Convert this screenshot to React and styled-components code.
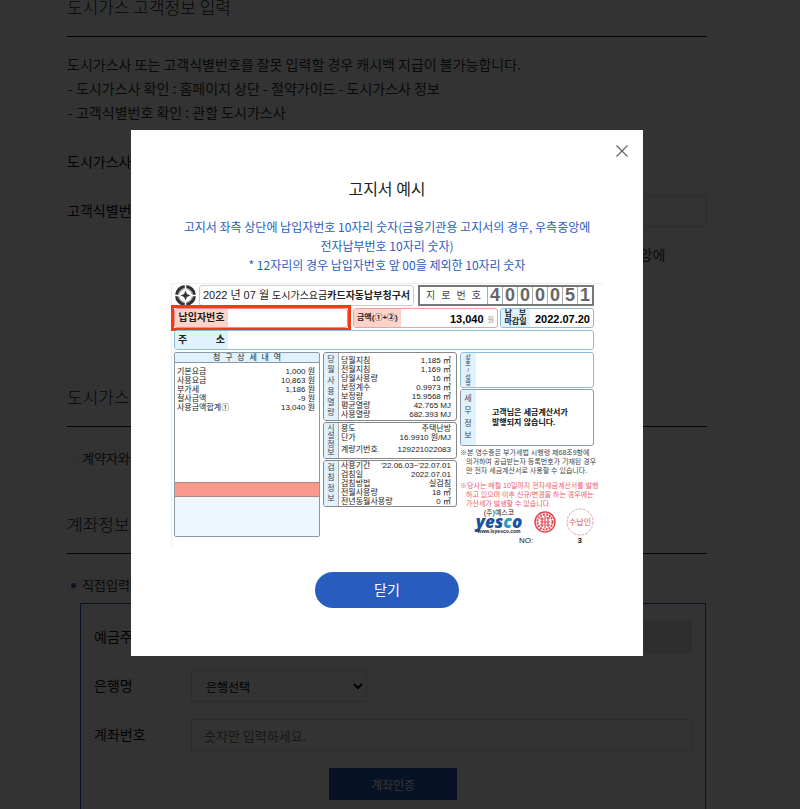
// src/App.jsx
import React from 'react';
import styled, { createGlobalStyle } from 'styled-components';

const GlobalStyle = createGlobalStyle`
  * {
    box-sizing: border-box;
  }

  body {
    margin: 0;
    overflow: hidden;
    background-color: #fff;
    color: #333;
    font-family: "Noto Sans CJK KR", sans-serif;
    font-weight: 400;
    font-size: 14px;
  }

  h2, h3, p {
    margin: 0;
  }

  input, select, button {
    font-family: inherit;
    font-weight: inherit;
  }
`;

/* ---------- page ---------- */

const Page = styled.main`
  height: 100vh;
  overflow: hidden;
  padding-right: 26px;
`;

const Content = styled.div`
  max-width: 640px;
  margin: -5px auto 0;
`;

const Section = styled.section`
  margin-bottom: ${({ $space }) => $space || 0}px;
`;

const Heading = styled.h2`
  padding-bottom: 17px;
  border-bottom: 1px solid #222;
  color: #222;
  font-size: 17px;
  font-weight: 300;
  line-height: 24px;
`;

const Guide = styled.div`
  padding: 15px 0 22px;
  line-height: 24px;
`;

const GuideItem = styled.p`
  padding-left: 1px;
`;

const Row = styled.div`
  display: flex;
  align-items: center;
  min-height: 32px;
  margin-bottom: 17px;
`;

const Label = styled.label`
  flex: 0 0 97px;
  padding-bottom: 3px;
  white-space: nowrap;
  color: #111;
`;

const TextInput = styled.input`
  flex: 1;
  min-width: 0;
  height: 32px;
  padding: 0 12px;
  border: 1px solid #ddd;
  background-color: #fff;
  font-size: 13px;

  &::placeholder {
    color: #777;
    opacity: 1;
  }

  &:disabled {
    background-color: #e4e4e4;
  }
`;

const Select = styled.select`
  width: 176px;
  height: 32px;
  padding: 0 0 0 10px;
  border: 1px solid #ddd;
  background-color: #fff;
  color: #000;
  font-size: 12px;
`;

const Note = styled.p`
  padding: 0 40px 0 124px;
  margin-top: -2px;
  line-height: 24px;
`;

const RadioLabel = styled.label`
  display: flex;
  align-items: center;
  gap: 3px;
  padding: ${({ $bottom }) => `19px 0 ${$bottom}px 1px`};
  font-size: 13px;
  line-height: 24px;
`;

const Radio = styled.input`
  appearance: none;
  width: 11px;
  height: 11px;
  margin: 0;
  border: 1px solid #ddd;
  border-radius: 50%;

  &:checked {
    background: radial-gradient(circle, #285dbf 2px, #fff 3px);
  }
`;

const AccountBox = styled.div`
  margin-left: 13px;
  margin-right: 1px;
  padding: 17px 13px;
  border: 1px solid #285dbf;
`;

const VerifyButton = styled.button`
  display: block;
  width: 128px;
  height: 32px;
  margin: 0 auto;
  border: none;
  background-color: #285dbf;
  color: #fff;
  font-size: 12px;
`;

/* ---------- popup ---------- */

const Overlay = styled.div`
  position: fixed;
  inset: 0;
  overflow: auto;
  padding: 130px 26px 0 0;
  background-color: rgba(0, 0, 0, 0.8);
`;

const Modal = styled.div`
  position: relative;
  display: flex;
  flex-direction: column;
  align-items: center;
  max-width: 512px;
  margin: 0 auto;
  padding: 46px 40px 48px;
  background-color: #fff;
`;

const ModalTitle = styled.h2`
  margin-bottom: 17px;
  color: #222;
  font-size: 16px;
  font-weight: 400;
  line-height: 24px;
`;

const ModalText = styled.p`
  margin-bottom: 9px;
  color: #285dbf;
  font-size: 12px;
  line-height: 19px;
  text-align: center;
  word-break: keep-all;
`;

const CloseIcon = styled.button`
  position: absolute;
  top: 10px;
  right: 10px;
  width: 22px;
  height: 22px;
  padding: 0;
  border: none;
  background: none;

  svg {
    display: block;
    margin: auto;
  }
`;

const CloseButton = styled.button`
  width: 144px;
  height: 36px;
  margin-top: 24px;
  padding-bottom: 3px;
  border: none;
  border-radius: 18px;
  background-color: #285dbf;
  color: #fff;
  font-size: 14px;
`;

/* ---------- bill sample ---------- */

const Bill = styled.div`
  align-self: stretch;
  height: 265px;
  padding: 1px 9px 0 2px;
  border-top: 1px solid #eee;
  border-left: 1px solid #eee;
  color: #222;
  font-family: "Liberation Sans", "Noto Sans CJK KR", sans-serif;
  font-size: 8px;
  line-height: 9px;
  white-space: nowrap;
`;

const BillRow = styled.div`
  display: flex;
  gap: ${({ $gap }) => $gap || 0}px;
  height: ${({ $height }) => $height}px;
  margin-bottom: 2px;
`;

const Cell = styled.div`
  display: flex;
  flex: ${({ $width }) => ($width ? `0 0 ${$width}px` : '1')};
  min-width: 0;
  border: 1px solid ${({ $line }) => $line || '#8fbcd3'};
  border-radius: 3px;
  overflow: hidden;
`;

const CellLabel = styled.div`
  display: flex;
  flex: 0 0 ${({ $width }) => $width}px;
  align-items: center;
  justify-content: ${({ $justify }) => $justify || 'center'};
  padding: 0 3px;
  background-color: ${({ $pink }) => ($pink ? '#fdd3c9' : '#dff2fd')};
  font-size: ${({ $size }) => $size || 8}px;
  font-weight: 700;
  line-height: 8px;
  text-align: center;
`;

const CellValue = styled.div`
  display: flex;
  flex: 1;
  align-items: center;
  justify-content: flex-end;
  gap: 4px;
  padding: 3px 3px 0 0;
  color: #000;
  font-size: 11px;
  font-weight: 700;
`;

const Unit = styled.span`
  color: #999;
  font-size: 7px;
  font-weight: 400;
`;

const Highlight = styled.div`
  display: flex;
  flex: 0 0 180px;
  margin: -3px 0 -3px -3px;
  border: 3px solid #f03c14;
`;

const BillTitle = styled.div`
  display: flex;
  flex: 0 0 215px;
  align-items: center;
  justify-content: center;
  gap: 3px;
  border: 1px solid #ccc;
  border-radius: 3px;
  font-size: 10px;
`;

const BillDate = styled.span`
  font-size: 11px;
`;

const Giro = styled.div`
  display: flex;
  flex: 1;
  margin-left: 2px;
  border: 2px solid #777;
  color: #666;
  font-size: 18px;
  font-weight: 700;
  line-height: 17px;
`;

const GiroLabel = styled.span`
  display: flex;
  flex: 1;
  justify-content: space-between;
  padding: 0 6px;
  color: #444;
  font-size: 10px;
  font-weight: 400;
`;

const GiroDigit = styled.span`
  flex: 0 0 15px;
  border-left: 1px solid #aaa;
  text-align: center;
`;

const Columns = styled.div`
  display: grid;
  grid-template-columns: 146px 134px minmax(0, 1fr);
  gap: 3px;
`;

const Detail = styled.div`
  display: flex;
  flex-direction: column;
  height: 185px;
  border: 1px solid #8a99a3;
  border-radius: 2px;
`;

const DetailHead = styled.div`
  display: flex;
  justify-content: space-between;
  height: 10px;
  padding: 0 38px;
  border-bottom: 1px solid #8a99a3;
  background-color: #dff2fd;
`;

const DetailList = styled.div`
  flex: 1;
  padding: 4px 4px 0 2px;
`;

const DetailSum = styled.div`
  height: 15px;
  border: solid #a88;
  border-width: 1px 0;
  background-color: #f9998c;
`;

const DetailFoot = styled.div`
  height: 39px;
  background-color: #eff7fe;
`;

const Line = styled.div`
  display: flex;
  justify-content: space-between;
  line-height: ${({ $height }) => $height || 9}px;
`;

const Group = styled(Cell)`
  flex: none;
  height: ${({ $height }) => $height}px;
  margin-bottom: 1px;
  border-color: ${({ $line }) => $line || '#888'};
`;

const SideLabel = styled.div`
  display: flex;
  flex: 0 0 15px;
  flex-direction: column;
  align-items: center;
  justify-content: space-evenly;
  border-right: 1px solid ${({ $plain }) => ($plain ? '#dff2fd' : '#aaa')};
  background-color: #dff2fd;
  color: #445;
  font-size: ${({ $size }) => $size || 8}px;
  line-height: ${({ $size }) => $size || 8}px;
`;

const GroupBody = styled.div`
  flex: 1;
  padding: ${({ $top }) => $top || 0}px 5px 0 2px;
`;

const TaxText = styled.p`
  flex: 1;
  align-self: center;
  padding-left: 16px;
  color: #111;
  font-size: 8px;
  font-weight: 700;
  line-height: 10px;
`;

const FootNote = styled.p`
  padding-left: 6px;
  margin-top: ${({ $top }) => $top}px;
  color: ${({ $red }) => ($red ? '#ee5a6c' : '#444')};
  font-size: 7px;
  line-height: 9px;
  text-indent: -6px;
`;

const Marks = styled.div`
  display: flex;
  align-items: center;
  gap: 10px;
  padding-left: 14px;
`;

const Brand = styled.div`
  flex: 1;
  display: flex;
  flex-direction: column;
  align-items: center;
  font-size: 7px;
  line-height: 7px;
`;

const BrandName = styled.div`
  color: #19529f;
  font-family: "Open Sans", sans-serif;
  font-size: 17px;
  font-style: italic;
  font-weight: 800;
  line-height: 12px;
`;

const BrandAccent = styled.span`
  color: #2b9ac4;
`;

const BrandUrl = styled.div`
  font-size: 5px;
  font-weight: 700;
`;

const SheetNo = styled.div`
  display: flex;
  justify-content: space-between;
  padding: 0 12px 0 59px;
`;

const charges = [
  ['기본요금', '1,000 원'],
  ['사용요금', '10,863 원'],
  ['부가세', '1,186 원'],
  ['절사금액', '-9 원'],
  ['사용금액합계①', '13,040 원'],
];

const usage = [
  ['당월지침', '1,185 ㎥'],
  ['전월지침', '1,169 ㎥'],
  ['당월사용량', '16 ㎥'],
  ['보정계수', '0.9973 ㎥'],
  ['보정량', '15.9568 ㎥'],
  ['평균열량', '42.765 MJ'],
  ['사용열량', '682.393 MJ'],
];

const facility = [
  ['용도', '주택난방'],
  ['단가', '16.9910 원/MJ'],
];

const checks = [
  ['사용기간', "'22.06.03~'22.07.01"],
  ['검침일', '2022.07.01'],
  ['검침방법', '실검침'],
  ['전월사용량', '18 ㎥'],
  ['전년동월사용량', '0 ㎥'],
];

const Lines = ({ items }) =>
  items.map(([name, value]) => (
    <Line key={name}>
      <span>{name}</span>
      <span>{value}</span>
    </Line>
  ));

const Chars = ({ text }) => text.split('').map((char, i) => <span key={i}>{char}</span>);

const Side = ({ text, plain, size }) => (
  <SideLabel $plain={plain} $size={size}>
    <Chars text={text} />
  </SideLabel>
);

const GasLogo = () => (
  <svg width="23" height="21" viewBox="0 0 23 21">
    <circle cx="11.5" cy="10.5" r="8.5" fill="none" stroke="#333" strokeWidth="4" />
    <circle cx="11.5" cy="10.5" r="7" fill="none" stroke="#fff" strokeWidth=".8" />
    <path d="M11.5 0v6M11.5 15v6M1 10.5h6M16 10.5h6" stroke="#fff" strokeWidth="1.5" />
    <path d="M11.5 5.5l1.4 3.6 3.6 1.4-3.6 1.4-1.4 3.6-1.4-3.6-3.6-1.4 3.6-1.4z" fill="#333" />
  </svg>
);

const RedSeal = () => (
  <svg width="22" height="22" viewBox="0 0 22 22" fill="none" stroke="#e0464f">
    <circle cx="11" cy="11" r="10" strokeWidth="1.5" />
    <circle cx="11" cy="11" r="7.5" strokeWidth="2" strokeDasharray="2 1" />
    <path d="M6 8h4M6 11h10M6 14h4M8 6v10M12 7h4M12 14h4M14 6v10M11 5v12" strokeWidth="1.2" />
  </svg>
);

const ReceiptStamp = () => (
  <svg width="28" height="28" viewBox="0 0 28 28">
    <circle cx="14" cy="14" r="13" fill="none" stroke="#eda0a6" strokeDasharray="3 1" />
    <text x="14" y="17" textAnchor="middle" fontSize="8" fill="#dc5964">
      수납인
    </text>
  </svg>
);

const BillSample = () => (
  <Bill>
    <BillRow $height={21} $gap={2}>
      <GasLogo />
      <BillTitle>
        <BillDate>2022 년 07 월</BillDate>
        <span>
          도시가스요금<b>카드자동납부청구서</b>
        </span>
      </BillTitle>
      <Giro>
        <GiroLabel>
          <Chars text="지로번호" />
        </GiroLabel>
        {'4000051'.split('').map((digit, i) => (
          <GiroDigit key={i}>{digit}</GiroDigit>
        ))}
      </Giro>
    </BillRow>

    <BillRow $height={20} $gap={2}>
      <Highlight>
        <Cell $line="#f08a92">
          <CellLabel $width={53} $size={10} $pink>
            납입자번호
          </CellLabel>
        </Cell>
      </Highlight>
      <Cell $width={145} $line="#f0a0a4">
        <CellLabel $width={45} $pink>
          금액(①+②)
        </CellLabel>
        <CellValue>
          13,040 <Unit>원</Unit>
        </CellValue>
      </Cell>
      <Cell>
        <CellLabel $width={29}>
          납 &nbsp; 부
          <br />
          마감일
        </CellLabel>
        <CellValue>2022.07.20</CellValue>
      </Cell>
    </BillRow>

    <BillRow $height={20}>
      <Cell>
        <CellLabel $width={53} $size={10} $justify="space-between">
          <span>주</span>
          <span>소</span>
        </CellLabel>
      </Cell>
    </BillRow>

    <Columns>
      <Detail>
        <DetailHead>
          <Chars text="청구상세내역" />
        </DetailHead>
        <DetailList>
          <Lines items={charges} />
        </DetailList>
        <DetailSum />
        <DetailFoot />
      </Detail>

      <div>
        <Group $height={69}>
          <Side text="당월사용열량" />
          <GroupBody $top={3}>
            <Lines items={usage} />
          </GroupBody>
        </Group>
        <Group $height={37}>
          <Side text="시설정보" />
          <GroupBody $top={1}>
            <Lines items={facility} />
            <Line $height={16}>
              <span>계량기번호</span>
              <span>129221022083</span>
            </Line>
          </GroupBody>
        </Group>
        <Group $height={47}>
          <Side text="검침정보" />
          <GroupBody>
            <Lines items={checks} />
          </GroupBody>
        </Group>
      </div>

      <div>
        <Group $height={36} $line="#8fbcd3">
          <Side text="상호/성명" size={6} plain />
        </Group>
        <Group $height={57} $line="#8a99a3">
          <Side text="세무정보" plain />
          <TaxText>
            고객님은 세금계산서가
            <br />
            발행되지 않습니다.
          </TaxText>
        </Group>
        <FootNote $top={2}>
          ※본 영수증은 부가세법 시행령 제68조9항에
          <br />
          의거하여 공급받는자 등록번호가 기재된 경우
          <br />
          만 전자 세금계산서로 사용할 수 있습니다.
        </FootNote>
        <FootNote $top={6} $red>
          ※당사는 매월 10일까지 전자세금계산서를 발행
          <br />
          하고 있으며 이후 신규/변경을 하는 경우에는
          <br />
          가산세가 발생할 수 있습니다.
        </FootNote>
        <Marks>
          <Brand>
            (주)예스코
            <BrandName>
              yes<BrandAccent>c</BrandAccent>o
            </BrandName>
            <BrandUrl>www.lsyesco.com</BrandUrl>
          </Brand>
          <RedSeal />
          <ReceiptStamp />
        </Marks>
        <SheetNo>
          <span>NO:</span>
          <b>3</b>
        </SheetNo>
      </div>
    </Columns>
  </Bill>
);

const BillModal = () => (
  <Overlay>
    <Modal role="dialog" aria-labelledby="bill-title">
      <CloseIcon type="button" aria-label="닫기">
        <svg width="12" height="12" viewBox="0 0 12 12" stroke="#666" strokeWidth="1.2">
          <path d="M.5 .5l11 11M11.5 .5l-11 11" />
        </svg>
      </CloseIcon>
      <ModalTitle id="bill-title">고지서 예시</ModalTitle>
      <ModalText>
        고지서 좌측 상단에 납입자번호 10자리 숫자(금융기관용 고지서의 경우, 우측중앙에
        <br />
        전자납부번호 10자리 숫자)
        <br />* 12자리의 경우 납입자번호 앞 00을 제외한 10자리 숫자
      </ModalText>
      <BillSample />
      <CloseButton type="button">닫기</CloseButton>
    </Modal>
  </Overlay>
);

const App = () => {
  return (
    <>
      <GlobalStyle />
      <Page>
        <Content>
          <Section $space={95}>
            <Heading>도시가스 고객정보 입력</Heading>
            <Guide>
              <p>도시가스사 또는 고객식별번호를 잘못 입력할 경우 캐시백 지급이 불가능합니다.</p>
              <GuideItem>- 도시가스사 확인 : 홈페이지 상단 - 절약가이드 - 도시가스사 정보</GuideItem>
              <GuideItem>- 고객식별번호 확인 : 관할 도시가스사</GuideItem>
            </Guide>
            <Row>
              <Label htmlFor="company">도시가스사</Label>
            </Row>
            <Row>
              <Label htmlFor="customer">고객식별번호</Label>
              <TextInput id="customer" type="text" />
            </Row>
            <Note>
              고지서 좌측 상단에 납입자번호 10자리 숫자(금융기관용 고지서의 경우, 우측중앙에
              전자납부번호 10자리 숫자)
            </Note>
          </Section>

          <Section $space={42}>
            <Heading>도시가스 계약정보</Heading>
            <RadioLabel $bottom={0}>
              <Radio type="radio" name="contract" />
              계약자와 동일
            </RadioLabel>
          </Section>

          <Section>
            <Heading>계좌정보 입력</Heading>
            <RadioLabel $bottom={6}>
              <Radio type="radio" name="account" defaultChecked />
              직접입력
            </RadioLabel>
            <AccountBox>
              <Row>
                <Label htmlFor="owner">예금주</Label>
                <TextInput id="owner" type="text" disabled />
              </Row>
              <Row>
                <Label htmlFor="bank">은행명</Label>
                <Select id="bank">
                  <option>은행선택</option>
                </Select>
              </Row>
              <Row>
                <Label htmlFor="number">계좌번호</Label>
                <TextInput id="number" type="text" placeholder="숫자만 입력하세요." />
              </Row>
              <VerifyButton type="button">계좌인증</VerifyButton>
            </AccountBox>
          </Section>
        </Content>
      </Page>
      <BillModal />
    </>
  );
};

export default App;
